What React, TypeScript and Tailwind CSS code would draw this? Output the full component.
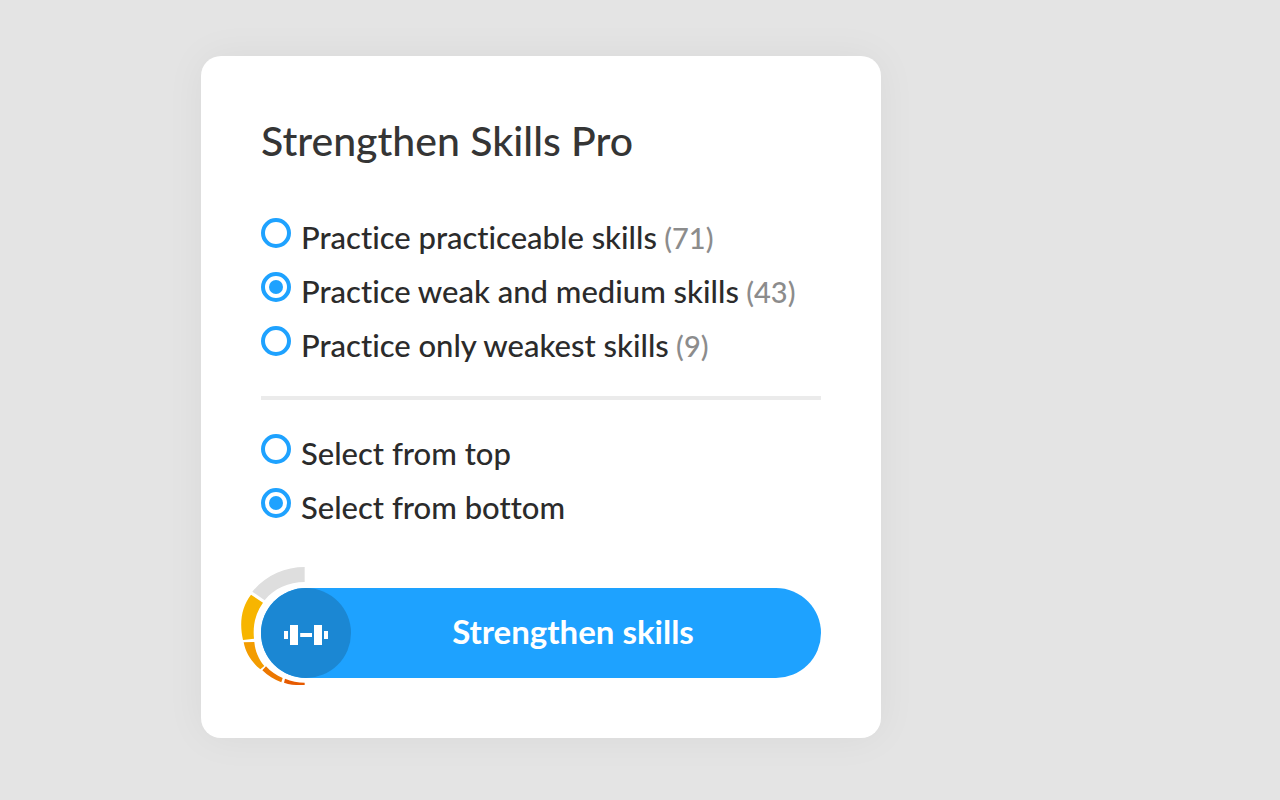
type Option = { id: string; label: string; count?: number };

const strengthOptions: Option[] = [
  { id: "practiceable", label: "Practice practiceable skills", count: 71 },
  { id: "weak-medium", label: "Practice weak and medium skills", count: 43 },
  { id: "weakest", label: "Practice only weakest skills", count: 9 },
];

const orderOptions: Option[] = [
  { id: "top", label: "Select from top" },
  { id: "bottom", label: "Select from bottom" },
];

function RadioGroup({ name, legend, options, selected }: { name: string; legend: string; options: Option[]; selected: string }) {
  return (
    <fieldset aria-label={legend}>
      {options.map((option) => (
        <label
          key={option.id}
          htmlFor={option.id}
          className="flex cursor-pointer items-start gap-[10px] py-2 text-[31px] leading-[38px] font-medium text-[#2b2b2b]"
        >
          <input
            type="radio"
            id={option.id}
            name={name}
            value={option.id}
            defaultChecked={option.id === selected}
            className="grid size-[30px] shrink-0 appearance-none place-content-center rounded-full border-4 border-[#1ea2ff] bg-white before:size-[14px] before:rounded-full checked:before:bg-[#1ea2ff]"
          />
          <span>
            {option.label}
            {option.count !== undefined && <span className="text-[29px] leading-none text-[#8c8c8c]"> ({option.count})</span>}
          </span>
        </label>
      ))}
    </fieldset>
  );
}

function StrengthArc() {
  return (
    <svg viewBox="30 33 198 360" className="pointer-events-none absolute -top-[22px] -left-[21px] h-[120px] w-[66px]" aria-hidden="true">
      <path fill="#dedede" d="M224 36C165 36 105 62 67 110L104 136C132 100 176 81 224 81Z" />
      <path fill="#f7b500" d="M63 119C35 155 27 203 39 255L72 251C68 212 76 174 99 143Z" />
      <path fill="#f39c00" d="M41 262C47 294 65 322 91 343L103 333C86 313 75 288 73 261Z" />
      <path fill="#ec7700" d="M97 346L108 334C122 350 139 361 158 369L154 382C133 374 113 362 97 346Z" />
      <path fill="#e65a00" d="M162 383L165 371C184 379 204 383 224 383L224 390C203 391 182 390 162 383Z" />
    </svg>
  );
}

function DumbbellIcon() {
  return (
    <svg viewBox="0 0 44 20" className="mt-1 h-5 w-11" fill="white" aria-hidden="true">
      <rect x="0" y="6" width="4" height="8" />
      <rect x="6" y="0" width="8" height="20" />
      <rect x="16.2" y="8" width="11.8" height="4" />
      <rect x="30" y="0" width="8" height="20" />
      <rect x="40" y="6" width="4" height="8" />
    </svg>
  );
}

export default function App() {
  return (
    <main className="min-h-screen bg-[#e4e4e4] px-5 pt-14 pb-[62px] font-['Lato','Open_Sans',sans-serif] [font-variant-ligatures:none] lg:pl-[201px]">
      <form
        className="w-full max-w-[680px] rounded-[20px] bg-white p-[60px] shadow-[0_0_40px_rgba(0,0,0,0.05)]"
        onSubmit={(event) => event.preventDefault()}
      >
        <h1 className="mb-11 text-[41px] leading-[50px] font-medium text-[#353535]">Strengthen Skills Pro</h1>
        <RadioGroup name="strength" legend="Skills to practice" options={strengthOptions} selected="weak-medium" />
        <hr className="mt-6 mb-[26px] border-t-4 border-[#ebebeb]" />
        <RadioGroup name="order" legend="Selection order" options={orderOptions} selected="bottom" />
        <div className="relative mt-[54px]">
          <StrengthArc />
          <button
            type="submit"
            className="flex w-full cursor-pointer items-center rounded-full bg-[#1ea2ff] pr-[26px] text-[33px] leading-[40px] font-bold text-white"
          >
            <span className="flex size-[90px] shrink-0 items-center justify-center rounded-full bg-[#1b87d3]">
              <DumbbellIcon />
            </span>
            <span className="flex-1 pb-1 text-center">Strengthen skills</span>
          </button>
        </div>
      </form>
    </main>
  );
}
